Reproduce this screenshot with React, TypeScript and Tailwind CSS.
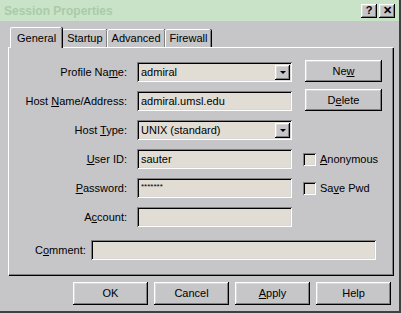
import React from "react"

// classic 3D borders
const raised =
  "shadow-[inset_-1px_-1px_#000,inset_1px_1px_#fff,inset_-2px_-2px_#808080,inset_2px_2px_#d8d8d8]"
const sunken =
  "shadow-[inset_1px_1px_#808080,inset_-1px_-1px_#fff,inset_2px_2px_#000,inset_-2px_-2px_#d8d8d8]"

function Field({ children, dropdown }: { children?: React.ReactNode; dropdown?: boolean }) {
  return (
    <div className={`h-[20px] w-[155px] bg-[#e1dcd4] flex items-center pl-[4px] pr-[2px] ${sunken}`}>
      <span className="flex-1 truncate leading-none">{children}</span>
      {dropdown && (
        <div className={`w-[15px] h-[15px] bg-[#c6c5c8] flex items-center justify-center ${raised}`}>
          <div className="w-0 h-0 border-l-[3px] border-r-[3px] border-t-[3px] border-l-transparent border-r-transparent border-t-black" />
        </div>
      )}
    </div>
  )
}

function Btn({ children, className = "" }: { children: React.ReactNode; className?: string }) {
  return (
    <div className={`h-[22px] bg-[#c6c5c8] flex items-center justify-center ${raised} ${className}`}>
      {children}
    </div>
  )
}

function Check({ children }: { children: React.ReactNode }) {
  return (
    <div className="flex items-center gap-[4px] pl-[1px]">
      <div className={`w-[13px] h-[13px] bg-[#e1dcd4] ${sunken}`} />
      <span>{children}</span>
    </div>
  )
}

function Tab({ children, active }: { children: React.ReactNode; active?: boolean }) {
  return (
    <div
      className={`relative flex items-center bg-[#c6c5c8] border-l border-t border-white shadow-[inset_-1px_0_#808080,1px_0_#000] rounded-t-[2px] ${
        active ? "h-[21px] z-10 px-[6px] -mb-[1px]" : "h-[18px] px-[4px]"
      }`}
    >
      {children}
    </div>
  )
}

export default function App() {
  return (
    <div className="w-[401px] h-[313px] bg-[#c6c5c8] text-[11px] text-black font-['Liberation_Sans',Arial,sans-serif] flex flex-col border-r-2 border-b-2 border-r-[#404040] border-b-[#404040] overflow-hidden">
      {/* title bar */}
      <div className="h-[21px] bg-[#c9e3c8] flex items-center justify-between pl-[4px] pr-[4px] shrink-0">
        <span className="font-bold text-[12px] text-[#a9cba8]">Session Properties</span>
        <div className="flex gap-[2px]">
          <div className={`w-[16px] h-[14px] bg-[#c6c5c8] flex items-center justify-center font-bold text-[11px] leading-none ${raised}`}>?</div>
          <div className={`w-[16px] h-[14px] bg-[#c6c5c8] flex items-center justify-center font-bold text-[11px] leading-none ${raised}`}>✕</div>
        </div>
      </div>

      <div className="flex flex-col pl-[8px] pr-[6px] pt-[6px]">
        {/* tabs */}
        <div className="flex items-end h-[20px] pl-[2px]">
          <Tab active>General</Tab>
          <Tab>Startup</Tab>
          <Tab>Advanced</Tab>
          <Tab>Firewall</Tab>
        </div>

        {/* panel */}
        <div className="h-[228px] border-t border-l border-white shadow-[inset_-1px_-1px_#808080,1px_1px_#000] pt-[14px] pl-[10px]">
          <div className="grid grid-cols-[108px_155px_90px] gap-x-[10px] gap-y-[9px] items-center">
            <span className="text-right">Profile Na<u>m</u>e:</span>
            <Field dropdown>admiral</Field>
            <Btn className="w-[77px] ml-[3px] -mt-[2px]">Ne<u>w</u></Btn>

            <span className="text-right">Host <u>N</u>ame/Address:</span>
            <Field>admiral.umsl.edu</Field>
            <Btn className="w-[77px] ml-[3px] -mt-[2px]">D<u>e</u>lete</Btn>

            <span className="text-right">Host <u>T</u>ype:</span>
            <Field dropdown>UNIX (standard)</Field>
            <span />

            <span className="text-right"><u>U</u>ser ID:</span>
            <Field>sauter</Field>
            <Check><u>A</u>nonymous</Check>

            <span className="text-right"><u>P</u>assword:</span>
            <Field>
              <span className="text-[8px] relative -top-[3px]">*******</span>
            </Field>
            <Check>Sa<u>v</u>e Pwd</Check>

            <span className="text-right">A<u>c</u>count:</span>
            <Field />
            <span />
          </div>

          <div className="flex items-center mt-[13px] pl-[16px]">
            <span className="w-[56px]">C<u>o</u>mment:</span>
            <div className={`h-[20px] w-[285px] bg-[#e1dcd4] ${sunken}`} />
          </div>
        </div>

        {/* bottom buttons */}
        <div className="flex justify-end gap-[6px] mt-[7px] pr-[2px]">
          <Btn className="w-[75px] h-[23px] shadow-[inset_-1px_-1px_#000,inset_1px_1px_#000,inset_-2px_-2px_#000,inset_2px_2px_#fff,inset_-3px_-3px_#808080]">OK</Btn>
          <Btn className="w-[75px] h-[23px]">Cancel</Btn>
          <Btn className="w-[75px] h-[23px]"><u>A</u>pply</Btn>
          <Btn className="w-[75px] h-[23px]">Help</Btn>
        </div>
      </div>
    </div>
  )
}
